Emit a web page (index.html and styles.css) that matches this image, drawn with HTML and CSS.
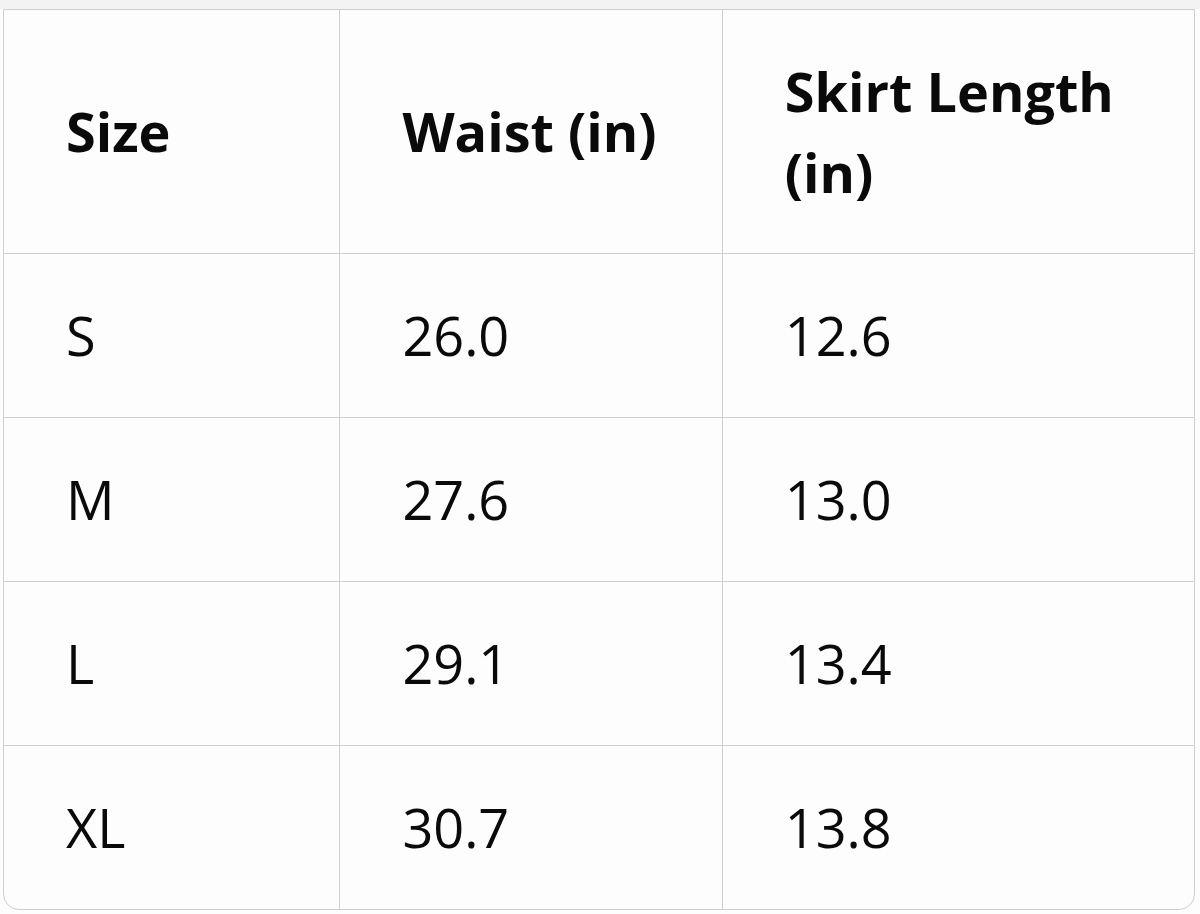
FILE: index.html
```html
<!DOCTYPE html>
<html>
<head>
<meta charset="utf-8">
<link rel="stylesheet" href="styles.css">
</head>
<body>
<div class="top-strip"></div>
<div class="wrap">
<table class="size-table">
<colgroup>
<col class="c1"><col class="c2"><col class="c3">
</colgroup>
<thead>
<tr><th>Size</th><th>Waist (in)</th><th>Skirt Length (in)</th></tr>
</thead>
<tbody>
<tr><td>S</td><td>26.0</td><td>12.6</td></tr>
<tr><td>M</td><td>27.6</td><td>13.0</td></tr>
<tr><td>L</td><td>29.1</td><td>13.4</td></tr>
<tr><td>XL</td><td>30.7</td><td>13.8</td></tr>
</tbody>
</table>
</div>
</body>
</html>
```
FILE: styles.css
```css
html, body {
  margin: 0;
  padding: 0;
  background: #fdfdfd;
}
body {
  font-family: "Open Sans", "Noto Sans", "Liberation Sans", sans-serif;
  color: #0a0a0a;
}
.top-strip {
  height: 9px;
  background: #f3f3f4;
}
.wrap {
  padding: 0 5px 4px 3px;
}
.size-table {
  width: 1192px;
  border-collapse: separate;
  border-spacing: 0;
  border: 1px solid #cfcfcf;
  border-radius: 0 0 16px 16px;
  background: #fdfdfd;
}
.c1 { width: 337px; }
.c2 { width: 383px; }
.c3 { width: 472px; }
th, td {
  text-align: left;
  vertical-align: middle;
  padding: 0 0 0 62px;
  font-size: 54px;
  line-height: 81px;
  border-right: 1px solid #cfcfcf;
  border-bottom: 1px solid #cfcfcf;
}
th:last-child, td:last-child { border-right: none; }
tbody tr:last-child td { border-bottom: none; }
th {
  font-weight: 700;
  height: 243px;
  padding-right: 40px;
}
td {
  font-weight: 400;
  height: 163px;
}
```
